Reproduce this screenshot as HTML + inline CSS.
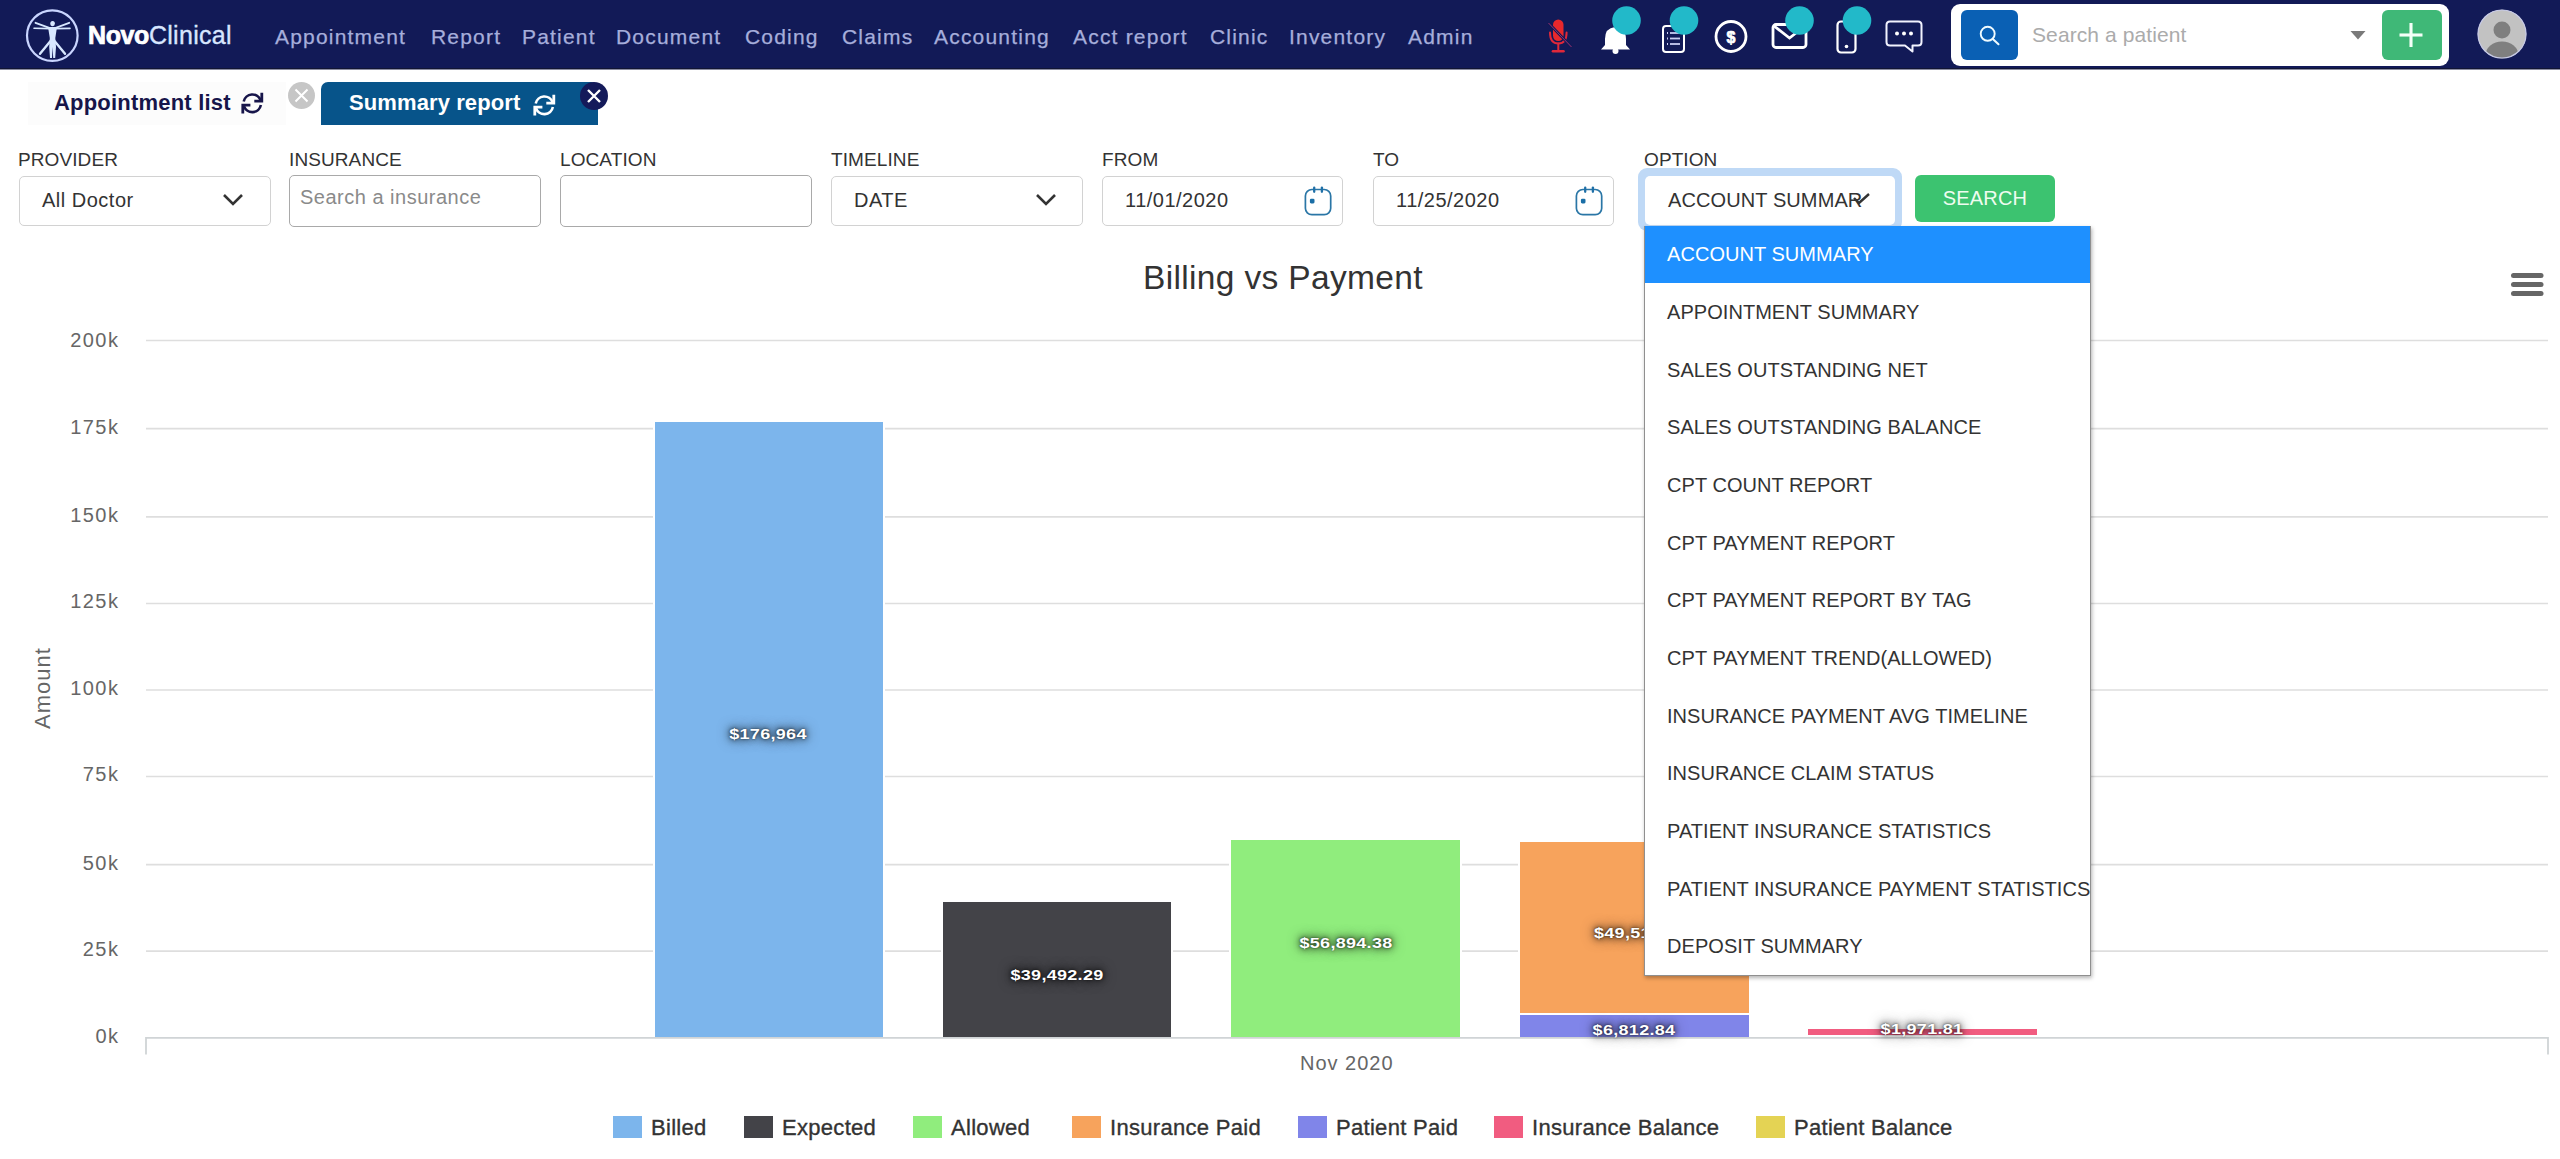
<!DOCTYPE html>
<html><head><meta charset="utf-8">
<style>
*{box-sizing:border-box;margin:0;padding:0}
html,body{width:2560px;height:1159px;overflow:hidden;background:#fff;font-family:"Liberation Sans",sans-serif;position:relative}
.a{position:absolute;white-space:nowrap}
#nav{position:absolute;left:0;top:0;width:2560px;height:69px;background:#121a57;border-bottom:1px solid #111535;box-shadow:0 1px 0 #8a8ca0}
.nv{position:absolute;top:22.5px;font-size:21px;color:#a6aedb;letter-spacing:1.2px;line-height:28px;-webkit-text-stroke:0.25px #a6aedb}
.badge{position:absolute;width:29px;height:29px;border-radius:50%;background:#22b9c9}
.lbl{position:absolute;top:148px;font-size:19px;color:#333;line-height:24px;letter-spacing:0.1px}
.inp{position:absolute;top:176px;width:252px;height:50px;border:1.5px solid #d2d2d2;border-radius:5px;background:#fff}
.inp.dk{border-color:#a9a9a9}
.itxt{position:absolute;font-size:20px;color:#333;line-height:24px;letter-spacing:0.5px}
.grid{position:absolute;left:146px;width:2402px;height:2px;background:#e6e6e6}
.yl{position:absolute;left:41px;width:78.5px;text-align:right;font-size:20px;color:#666;line-height:24px;letter-spacing:1.5px}
.bar{position:absolute;box-shadow:-2px 0 0 #fff,2px 0 0 #fff,0 -1px 0 #fff}
.dl{position:absolute;font-size:15px;font-weight:700;color:#fff;letter-spacing:0.25px;line-height:20px;text-shadow:0 0 12px rgba(0,0,0,.75),0 0 6px rgba(0,0,0,.75),0 0 2px rgba(0,0,0,.6);transform:translateX(-50%) scaleX(1.2)}
.dd{position:absolute;left:1667px;font-size:20px;color:#333;line-height:24px;letter-spacing:0.05px}
.lg{position:absolute;top:1115px;font-size:22px;color:#333;line-height:26px;letter-spacing:0.3px;-webkit-text-stroke:0.35px #333}
.lsq{position:absolute;top:1116px;width:29px;height:22px}
</style></head><body>

<!-- NAVBAR -->
<div id="nav"></div>
<svg class="a" style="left:0;top:0" width="260" height="68" viewBox="0 0 260 68">
  <circle cx="52.3" cy="35.6" r="25.3" fill="none" stroke="#c9d5ff" stroke-width="2.2"/>
  <g fill="#d8e8ff" stroke="none">
    <ellipse cx="52.6" cy="23.6" rx="2.3" ry="2.6"/>
    <path d="M48 27 L57 27 L55.3 38 L56 47 L55.2 58 L53.2 58 L52.6 47 L52 58 L50 58 L49.2 47 L49.8 38 Z"/>
  </g>
  <g stroke="#d8e8ff" stroke-linecap="round" fill="none">
    <path d="M50 28.2 L35.5 22.8" stroke-width="1.8"/>
    <path d="M55 28.2 L69.2 22.8" stroke-width="1.8"/>
    <path d="M50 28.6 L34 28.2" stroke-width="1.6"/>
    <path d="M55 28.6 L70 28.4" stroke-width="1.6"/>
    <path d="M50.5 41 L40 53.8" stroke-width="2.4"/>
    <path d="M54.5 41 L65 53.8" stroke-width="2.4"/>
  </g>
</svg>
<div class="a" style="left:88px;top:20px;font-size:25px;line-height:30px;color:#fff;font-weight:700;letter-spacing:-0.4px;-webkit-text-stroke:0.7px #fff">Novo<span style="font-weight:400;color:#d8e6ff;letter-spacing:0.3px;-webkit-text-stroke:0.35px #d8e6ff">Clinical</span></div>

<div class="nv" style="left:275px">Appointment</div>
<div class="nv" style="left:431px">Report</div>
<div class="nv" style="left:522px">Patient</div>
<div class="nv" style="left:616px">Document</div>
<div class="nv" style="left:745px">Coding</div>
<div class="nv" style="left:842px">Claims</div>
<div class="nv" style="left:934px">Accounting</div>
<div class="nv" style="left:1073px">Acct report</div>
<div class="nv" style="left:1210px">Clinic</div>
<div class="nv" style="left:1289px">Inventory</div>
<div class="nv" style="left:1408px">Admin</div>

<!-- ICONS -->
<svg class="a" style="left:1540px;top:0" width="400" height="68" viewBox="1540 0 400 68">
  <!-- mic -->
  <rect x="1553" y="19.5" width="10.5" height="21.5" rx="5.25" fill="#e8282c"/>
  <g fill="none" stroke="#e0283a" stroke-width="2" stroke-linecap="round">
    <path d="M1550 32.5 Q1550 43.5 1558.3 43.5 Q1566.6 43.5 1566.6 32.5"/>
    <line x1="1558.3" y1="43.5" x2="1558.3" y2="50.5"/>
  </g>
  <line x1="1553" y1="51.3" x2="1563.5" y2="51.3" stroke="#e0283a" stroke-width="2.6" stroke-linecap="round"/>
  <line x1="1548.5" y1="23" x2="1571.5" y2="47" stroke="#121a57" stroke-width="2.6"/>
  <line x1="1548.5" y1="23" x2="1571.5" y2="47" stroke="#9a3070" stroke-width="1"/>
  <!-- bell -->
  <path d="M1615 27 Q1605 28 1605 39 L1605 45 L1601 49.5 L1630 49.5 L1626 45 L1626 39 Q1626 28 1615 27 Z" fill="#fff"/>
  <circle cx="1615.5" cy="51" r="3" fill="#fff"/>
  <!-- list doc -->
  <rect x="1663" y="26" width="21" height="26" rx="3" fill="none" stroke="#fff" stroke-width="2"/>
  <g stroke="#c9cdf2" stroke-width="1.8">
    <line x1="1667" y1="33" x2="1668" y2="33"/><line x1="1670" y1="33" x2="1680" y2="33"/>
    <line x1="1667" y1="38.5" x2="1668" y2="38.5"/><line x1="1670" y1="38.5" x2="1680" y2="38.5"/>
    <line x1="1667" y1="44" x2="1668" y2="44"/><line x1="1670" y1="44" x2="1680" y2="44"/>
  </g>
  <!-- dollar -->
  <circle cx="1731" cy="36.5" r="15" fill="none" stroke="#fff" stroke-width="2.8"/>
  <text x="1731" y="42.5" text-anchor="middle" font-family="Liberation Sans" font-weight="700" font-size="16" fill="#fff" stroke="#fff" stroke-width="0.7">$</text>
  <!-- mail -->
  <rect x="1773" y="24.5" width="33" height="23" rx="3" fill="none" stroke="#fff" stroke-width="2.8"/>
  <path d="M1774 26 L1789.5 38 L1805 26" fill="none" stroke="#fff" stroke-width="2.8"/>
  <!-- phone -->
  <rect x="1837.5" y="21.5" width="18" height="31" rx="3.5" fill="none" stroke="#fff" stroke-width="2.2"/>
  <circle cx="1846.5" cy="46.5" r="1.8" fill="#fff"/>
  <!-- chat -->
  <path d="M1890 21.5 L1918 21.5 Q1921.5 21.5 1921.5 25 L1921.5 42 Q1921.5 45.5 1918 45.5 L1912.5 45.5 L1912.5 51.5 L1905 45.5 L1890 45.5 Q1886.5 45.5 1886.5 42 L1886.5 25 Q1886.5 21.5 1890 21.5 Z" fill="none" stroke="#f2f3ff" stroke-width="2" stroke-linejoin="round"/>
  <circle cx="1897" cy="33.5" r="2" fill="#fff"/><circle cx="1904" cy="33.5" r="2" fill="#fff"/><circle cx="1911" cy="33.5" r="2" fill="#fff"/>
  <!-- badges -->
  <circle cx="1626.5" cy="20.5" r="14.3" fill="#22b9c9"/>
  <circle cx="1684" cy="20.5" r="14.3" fill="#22b9c9"/>
  <circle cx="1799.5" cy="20.5" r="14.3" fill="#22b9c9"/>
  <circle cx="1857" cy="20.5" r="14.3" fill="#22b9c9"/>
</svg>

<!-- SEARCH PATIENT -->
<div class="a" style="left:1951px;top:4px;width:498px;height:62px;background:#fff;border-radius:9px"></div>
<div class="a" style="left:1961px;top:10px;width:57px;height:50px;background:#0a60b4;border-radius:6px"></div>
<svg class="a" style="left:1961px;top:10px" width="57" height="50" viewBox="0 0 57 50">
  <circle cx="26.7" cy="23.8" r="7" fill="none" stroke="#f0fbff" stroke-width="1.9"/>
  <line x1="31.8" y1="28.9" x2="37.5" y2="34.3" stroke="#f0fbff" stroke-width="2" stroke-linecap="round"/>
</svg>
<div class="a" style="left:2032px;top:21px;font-size:21px;line-height:28px;color:#ababab;letter-spacing:0.1px">Search a patient</div>
<svg class="a" style="left:2348px;top:28px" width="20" height="14" viewBox="0 0 20 14"><path d="M2.5 3 L17.5 3 L10 11.5 Z" fill="#7a7a7a"/></svg>
<div class="a" style="left:2382px;top:10px;width:60px;height:50px;background:#3fb877;border-radius:6px"></div>
<svg class="a" style="left:2382px;top:10px" width="60" height="50" viewBox="0 0 60 50">
  <line x1="29" y1="13" x2="29" y2="37" stroke="#f4fff8" stroke-width="3.1"/>
  <line x1="17.5" y1="25" x2="40.5" y2="25" stroke="#f4fff8" stroke-width="3.1"/>
</svg>
<svg class="a" style="left:2477px;top:9px" width="50" height="50" viewBox="0 0 50 50">
  <defs><clipPath id="avc"><circle cx="25" cy="25" r="24.3"/></clipPath></defs>
  <circle cx="25" cy="25" r="24.3" fill="#c2c2c2"/>
  <g clip-path="url(#avc)" fill="#7f7f7f">
    <circle cx="25" cy="21" r="8.5"/>
    <ellipse cx="25" cy="46.5" rx="16.5" ry="14"/>
  </g>
  <circle cx="25" cy="25" r="24" fill="none" stroke="#c6c9e6" stroke-width="1.2"/>
</svg>

<!-- TABS -->
<div class="a" style="left:28px;top:82px;width:258px;height:43px;background:#fcfcfc"></div>
<div class="a" style="left:54px;top:89px;font-size:22px;line-height:28px;font-weight:700;color:#17154a;letter-spacing:0.2px">Appointment list</div>
<svg class="a" style="left:240px;top:91px" width="26" height="26" viewBox="0 0 26 26">
  <g fill="none" stroke="#17154a" stroke-width="2.6">
    <path d="M3.7 10.5 A8.8 8.8 0 0 1 20.6 9.3"/>
    <path d="M20.9 14.1 A8.8 8.8 0 0 1 4.0 15.3"/>
    <path d="M14.3 10.2 L21.8 10.2 L21.8 1.8" stroke-linejoin="miter" stroke-width="2.8"/>
    <path d="M10.4 14.2 L2.8 14.2 L2.8 22.4" stroke-linejoin="miter" stroke-width="2.8"/>
  </g>
</svg>
<div class="a" style="left:288px;top:82px;width:27px;height:27px;border-radius:50%;background:#c6c6c6"></div>
<svg class="a" style="left:288px;top:82px" width="27" height="27" viewBox="0 0 27 27"><path d="M7.5 7.5 L19.5 19.5 M19.5 7.5 L7.5 19.5" stroke="#fff" stroke-width="2"/></svg>

<div class="a" style="left:321px;top:82px;width:277px;height:43px;background:#07548a;border-radius:7px 7px 0 0"></div>
<div class="a" style="left:349px;top:89px;font-size:22px;line-height:28px;font-weight:700;color:#fff;letter-spacing:0.1px">Summary report</div>
<svg class="a" style="left:532px;top:93px" width="26" height="26" viewBox="0 0 26 26">
  <g fill="none" stroke="#fff" stroke-width="2.6">
    <path d="M3.7 10.5 A8.8 8.8 0 0 1 20.6 9.3"/>
    <path d="M20.9 14.1 A8.8 8.8 0 0 1 4.0 15.3"/>
    <path d="M14.3 10.2 L21.8 10.2 L21.8 1.8" stroke-linejoin="miter" stroke-width="2.8"/>
    <path d="M10.4 14.2 L2.8 14.2 L2.8 22.4" stroke-linejoin="miter" stroke-width="2.8"/>
  </g>
</svg>
<div class="a" style="left:580px;top:82px;width:28px;height:28px;border-radius:50%;background:#141a5a"></div>
<svg class="a" style="left:580px;top:82px" width="28" height="28" viewBox="0 0 28 28"><path d="M8 8 L20 20 M20 8 L8 20" stroke="#fff" stroke-width="2.4"/></svg>

<!-- FILTERS -->
<div class="lbl" style="left:18px">PROVIDER</div>
<div class="lbl" style="left:289px">INSURANCE</div>
<div class="lbl" style="left:560px">LOCATION</div>
<div class="lbl" style="left:831px">TIMELINE</div>
<div class="lbl" style="left:1102px">FROM</div>
<div class="lbl" style="left:1373px">TO</div>
<div class="lbl" style="left:1644px">OPTION</div>

<div class="inp" style="left:19px"></div>
<div class="itxt" style="left:42px;top:188px">All Doctor</div>
<svg class="a" style="left:220px;top:190px" width="26" height="20" viewBox="0 0 26 20"><path d="M4 5 L13 14 L22 5" fill="none" stroke="#333" stroke-width="2.6"/></svg>

<div class="inp dk" style="left:289px;top:175px;height:52px"></div>
<div class="itxt" style="left:300px;top:185px;color:#8a8a8a">Search a insurance</div>

<div class="inp dk" style="left:560px;top:175px;height:52px"></div>

<div class="inp" style="left:831px"></div>
<div class="itxt" style="left:854px;top:188px">DATE</div>
<svg class="a" style="left:1033px;top:190px" width="26" height="20" viewBox="0 0 26 20"><path d="M4 5 L13 14 L22 5" fill="none" stroke="#333" stroke-width="2.6"/></svg>

<div class="inp" style="left:1102px;width:241px"></div>
<div class="itxt" style="left:1125px;top:188px">11/01/2020</div>
<svg class="a" style="left:1302px;top:184px" width="32" height="32" viewBox="0 0 32 32">
  <rect x="3.4" y="5.5" width="25.3" height="25.2" rx="6.5" fill="none" stroke="#2a76a6" stroke-width="1.7"/>
  <line x1="12.2" y1="3.6" x2="12.2" y2="7.8" stroke="#1f70a8" stroke-width="2.3" stroke-linecap="round"/>
  <line x1="19.9" y1="3.6" x2="19.9" y2="7.8" stroke="#1f70a8" stroke-width="2.3" stroke-linecap="round"/>
  <rect x="7.9" y="14.8" width="4.6" height="4.6" rx="1.3" fill="#1a6ea6"/>
</svg>

<div class="inp" style="left:1373px;width:241px"></div>
<div class="itxt" style="left:1396px;top:188px">11/25/2020</div>
<svg class="a" style="left:1573px;top:184px" width="32" height="32" viewBox="0 0 32 32">
  <rect x="3.4" y="5.5" width="25.3" height="25.2" rx="6.5" fill="none" stroke="#2a76a6" stroke-width="1.7"/>
  <line x1="12.2" y1="3.6" x2="12.2" y2="7.8" stroke="#1f70a8" stroke-width="2.3" stroke-linecap="round"/>
  <line x1="19.9" y1="3.6" x2="19.9" y2="7.8" stroke="#1f70a8" stroke-width="2.3" stroke-linecap="round"/>
  <rect x="7.9" y="14.8" width="4.6" height="4.6" rx="1.3" fill="#1a6ea6"/>
</svg>

<div class="a" style="left:1638px;top:168px;width:264px;height:63px;border-radius:9px;background:#bfd9f6"></div>
<div class="a" style="left:1645px;top:176px;width:250px;height:49px;border-radius:5px;background:#fff"></div>
<div class="itxt" style="left:1668px;top:188px;letter-spacing:0.1px">ACCOUNT SUMMAR</div>
<svg class="a" style="left:1850px;top:190px" width="24" height="20" viewBox="0 0 24 20"><path d="M4 8 L9 13 L19 4" fill="none" stroke="#333" stroke-width="2.4"/></svg>

<div class="a" style="left:1915px;top:175px;width:140px;height:47px;border-radius:6px;background:#3cc370"></div>
<div class="a" style="left:1915px;top:186px;width:140px;text-align:center;font-size:20px;line-height:24px;color:#eefcef;letter-spacing:0.2px">SEARCH</div>

<!-- CHART -->
<div class="a" style="left:1143px;top:258px;font-size:33.5px;line-height:40px;color:#333;letter-spacing:0.35px">Billing vs Payment</div>
<svg class="a" style="left:2508px;top:270px" width="36" height="30" viewBox="0 0 36 30">
  <g stroke="#666" stroke-width="5" stroke-linecap="round"><line x1="5.5" y1="5.5" x2="33" y2="5.5"/><line x1="5.5" y1="14.5" x2="33" y2="14.5"/><line x1="5.5" y1="23.5" x2="33" y2="23.5"/></g>
</svg>

<svg class="a" style="left:0;top:0" width="2560" height="1159" viewBox="0 0 2560 1159">
  <g stroke="#dedede" stroke-width="1.7"><line x1="146" y1="340.50" x2="2548" y2="340.50"/><line x1="146" y1="428.70" x2="2548" y2="428.70"/><line x1="146" y1="516.80" x2="2548" y2="516.80"/><line x1="146" y1="603.50" x2="2548" y2="603.50"/><line x1="146" y1="690.00" x2="2548" y2="690.00"/><line x1="146" y1="776.50" x2="2548" y2="776.50"/><line x1="146" y1="864.70" x2="2548" y2="864.70"/><line x1="146" y1="951.20" x2="2548" y2="951.20"/></g>
  <g stroke="#d0d4d6" stroke-width="1.8" fill="none"><path d="M146 1054.5 L146 1037.9 L2548 1037.9 L2548 1054.5"/></g>
</svg>
<div class="yl" style="top:328.1px">200k</div>
<div class="yl" style="top:414.5px">175k</div>
<div class="yl" style="top:502.6px">150k</div>
<div class="yl" style="top:589.3px">125k</div>
<div class="yl" style="top:675.8px">100k</div>
<div class="yl" style="top:762.3px">75k</div>
<div class="yl" style="top:850.5px">50k</div>
<div class="yl" style="top:937.0px">25k</div>
<div class="yl" style="top:1023.7px">0k</div>

<div class="a" style="left:31px;top:729px;font-size:22px;line-height:24px;color:#666;letter-spacing:1px;transform:rotate(-90deg);transform-origin:0 0">Amount</div>

<div class="bar" style="left:655px;top:422px;width:228px;height:615px;background:#7cb5ec"></div>
<div class="bar" style="left:943px;top:902px;width:228px;height:135px;background:#434348"></div>
<div class="bar" style="left:1231px;top:840px;width:229px;height:197px;background:#90ed7d"></div>
<div class="bar" style="left:1520px;top:842px;width:229px;height:171px;background:#f7a35c"></div>
<div class="bar" style="left:1520px;top:1015px;width:229px;height:22px;background:#8085e9"></div>
<div class="bar" style="left:1808px;top:1029px;width:229px;height:6px;background:#f15c80"></div>

<div class="dl" style="left:768px;top:724.2px">$176,964</div>
<div class="dl" style="left:1057px;top:964.6px">$39,492.29</div>
<div class="dl" style="left:1346px;top:933.4px">$56,894.38</div>
<div class="dl" style="left:1594px;top:923.2px;transform:scaleX(1.2);transform-origin:0 0">$49,513.77</div>
<div class="dl" style="left:1634px;top:1019.6px">$6,812.84</div>
<div class="dl" style="left:1922px;top:1018.5px">$1,971.81</div>

<div class="a" style="left:1300px;top:1051px;font-size:20px;line-height:24px;color:#666;letter-spacing:1px">Nov 2020</div>

<!-- LEGEND -->
<div class="lsq" style="left:613px;background:#7cb5ec"></div><div class="lg" style="left:651px">Billed</div>
<div class="lsq" style="left:744px;background:#434348"></div><div class="lg" style="left:782px">Expected</div>
<div class="lsq" style="left:913px;background:#90ed7d"></div><div class="lg" style="left:951px">Allowed</div>
<div class="lsq" style="left:1072px;background:#f7a35c"></div><div class="lg" style="left:1110px">Insurance Paid</div>
<div class="lsq" style="left:1298px;background:#8085e9"></div><div class="lg" style="left:1336px">Patient Paid</div>
<div class="lsq" style="left:1494px;background:#f15c80"></div><div class="lg" style="left:1532px">Insurance Balance</div>
<div class="lsq" style="left:1756px;background:#e4d354"></div><div class="lg" style="left:1794px">Patient Balance</div>

<!-- DROPDOWN -->
<div class="a" style="left:1644px;top:226px;width:447px;height:750px;background:#fff;border:1px solid #8f8f8f;box-shadow:1px 2px 4px rgba(0,0,0,0.3)"></div>
<div class="a" style="left:1645px;top:226px;width:445px;height:57px;background:#1e90ff"></div>
<div class="dd" style="top:242px;color:#fff">ACCOUNT SUMMARY</div>
<div class="dd" style="top:300px">APPOINTMENT SUMMARY</div>
<div class="dd" style="top:358px">SALES OUTSTANDING NET</div>
<div class="dd" style="top:415px">SALES OUTSTANDING BALANCE</div>
<div class="dd" style="top:473px">CPT COUNT REPORT</div>
<div class="dd" style="top:531px">CPT PAYMENT REPORT</div>
<div class="dd" style="top:588px">CPT PAYMENT REPORT BY TAG</div>
<div class="dd" style="top:646px">CPT PAYMENT TREND(ALLOWED)</div>
<div class="dd" style="top:704px">INSURANCE PAYMENT AVG TIMELINE</div>
<div class="dd" style="top:761px">INSURANCE CLAIM STATUS</div>
<div class="dd" style="top:819px">PATIENT INSURANCE STATISTICS</div>
<div class="dd" style="top:877px">PATIENT INSURANCE PAYMENT STATISTICS</div>
<div class="dd" style="top:934px">DEPOSIT SUMMARY</div>

</body></html>
